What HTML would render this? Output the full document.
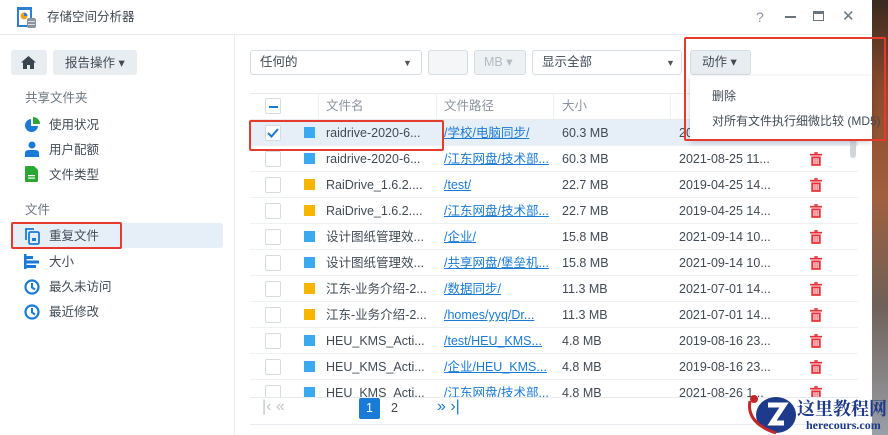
<!DOCTYPE html>
<html><head><meta charset="utf-8"><style>
*{margin:0;padding:0;box-sizing:border-box}
body{width:888px;height:435px;overflow:hidden;background:#fff;font-family:"Liberation Sans","Noto Sans CJK SC",sans-serif;font-size:12.5px;color:#414b55;position:relative}
.a{position:absolute}
.desk{left:872px;top:0;width:16px;height:435px;background:linear-gradient(180deg,#3a2a22 0%,#8a4a2c 20%,#a0603e 45%,#6f6058 70%,#9aa0a8 100%)}
.grp{position:absolute;left:25px;color:#6a7580;font-size:12.5px;line-height:16px}
.cb{position:absolute;left:265px;width:16px;height:16px;border:1px solid #d6dce2;border-radius:2px;background:#fff}
.sq{position:absolute;left:304px;width:11px;height:11px}
.row{position:absolute;left:250px;width:608px;height:26px;border-bottom:1px solid #eef1f4}
.t{position:absolute;white-space:nowrap;font-size:12.5px;color:#414b55;line-height:16px}
.lk{color:#1a7bd6;text-decoration:underline}
.red{position:absolute;border:2px solid #e53a2e;border-radius:2px}
.btn{position:absolute;border:1px solid #d6dde4;border-radius:3px;background:#fff}
</style></head><body>
<div class="a desk"></div>
<svg class="a" style="left:15px;top:6px" width="24" height="24" viewBox="0 0 24 24"><rect x="2" y="1" width="15" height="20" fill="#2f7fd0"/><rect x="4" y="4" width="11" height="15" fill="#fff"/><circle cx="9" cy="10" r="3.5" fill="#f0a020"/><path d="M9 10V6.5A3.5 3.5 0 0 1 12.5 10z" fill="#2f7fd0"/><rect x="12" y="12" width="9" height="10" rx="2" fill="#8a949e"/><rect x="13" y="15" width="7" height="1" fill="#ddd"/><rect x="13" y="18" width="7" height="1" fill="#ddd"/></svg>
<div class="t" style="left:47px;top:9px">存储空间分析器</div>
<div class="t" style="left:756px;top:9px;font-size:14px;color:#8a949e">?</div>
<div class="a" style="left:785px;top:16px;width:11px;height:2px;background:#6a7580"></div>
<div class="a" style="left:813px;top:11px;width:11px;height:10px;border:1.5px solid #6a7580;border-top-width:3px"></div>
<div class="t" style="left:842px;top:9px;font-size:15px;color:#6a7580">✕</div>
<div class="a" style="left:0;top:34px;width:872px;height:1px;background:#e8ecf0"></div>
<div class="a" style="left:234px;top:35px;width:1px;height:400px;background:#e8ecf0"></div>
<div class="a" style="left:11px;top:50px;width:36px;height:25px;background:#e8edf2;border-radius:3px"></div>
<svg class="a" style="left:21px;top:56px" width="15" height="13" viewBox="0 0 15 13"><path d="M7.5 0L0 6.5h2V13h4V9h3v4h4V6.5h2z" fill="#3a444e"/></svg>
<div class="a" style="left:53px;top:50px;width:84px;height:25px;background:#e8edf2;border-radius:3px"></div>
<div class="t" style="left:65px;top:55px">报告操作 ▾</div>
<div class="grp" style="top:90px">共享文件夹</div>
<svg class="a" style="left:24px;top:117px" width="16" height="16" viewBox="0 0 16 16"><path d="M7 2A6.5 6.5 0 1 0 14 9H7z" fill="#1a7bd6"/><path d="M9 0V7h7A7 7 0 0 0 9 0z" fill="#2aa832"/></svg>
<div class="t" style="left:49px;top:117px">使用状况</div>
<svg class="a" style="left:25px;top:141px" width="14" height="16" viewBox="0 0 14 16"><circle cx="7" cy="4" r="3.5" fill="#1a7bd6"/><path d="M0 16V12Q0 9 4 9h6q4 0 4 3v4z" fill="#1a7bd6"/></svg>
<div class="t" style="left:49px;top:142px">用户配额</div>
<svg class="a" style="left:25px;top:166px" width="13" height="16" viewBox="0 0 13 16"><path d="M0 1Q0 0 1 0h8l4 4v11q0 1-1 1H1q-1 0-1-1z" fill="#2aa832"/><rect x="3" y="9" width="7" height="1.2" fill="#fff"/><rect x="3" y="11.5" width="7" height="1.2" fill="#fff"/></svg>
<div class="t" style="left:49px;top:167px">文件类型</div>
<div class="grp" style="top:202px">文件</div>
<div class="a" style="left:11px;top:223px;width:212px;height:25px;background:#e6eef8;border-radius:3px"></div>
<svg class="a" style="left:24px;top:228px" width="16" height="17" viewBox="0 0 16 17"><path d="M2 12V1h8" fill="none" stroke="#1a7bd6" stroke-width="1.8"/><rect x="5" y="4" width="10" height="12" rx="1.5" fill="none" stroke="#1a7bd6" stroke-width="1.8"/><rect x="8" y="10" width="4" height="3" fill="#1a7bd6"/></svg>
<div class="t" style="left:49px;top:228px">重复文件</div>
<svg class="a" style="left:24px;top:254px" width="16" height="15" viewBox="0 0 16 15"><rect x="0" y="0" width="2.5" height="15" fill="#1a7bd6"/><rect x="2" y="2" width="7" height="3" fill="#1a7bd6"/><rect x="2" y="6.5" width="13" height="3" fill="#1a7bd6"/><rect x="2" y="11" width="10" height="3" fill="#1a7bd6"/></svg>
<div class="t" style="left:49px;top:254px">大小</div>
<svg class="a" style="left:24px;top:279px" width="16" height="16" viewBox="0 0 16 16"><circle cx="8" cy="8" r="6.5" fill="none" stroke="#1a7bd6" stroke-width="2.2"/><path d="M8 4v4.5l3 2" fill="none" stroke="#1a7bd6" stroke-width="2"/></svg>
<div class="t" style="left:49px;top:279px">最久未访问</div>
<svg class="a" style="left:24px;top:304px" width="16" height="16" viewBox="0 0 16 16"><circle cx="8" cy="8" r="6.5" fill="none" stroke="#1a7bd6" stroke-width="2.2"/><path d="M8 4v4.5l3 2" fill="none" stroke="#1a7bd6" stroke-width="2"/></svg>
<div class="t" style="left:49px;top:304px">最近修改</div>
<div class="red" style="left:11px;top:222px;width:111px;height:27px"></div>
<div class="btn" style="left:250px;top:50px;width:172px;height:25px"></div>
<div class="t" style="left:260px;top:54px">任何的</div>
<div class="t" style="left:403px;top:55px;font-size:9px;color:#555">▼</div>
<div class="btn" style="left:428px;top:50px;width:40px;height:25px;background:#f4f6f8"></div>
<div class="btn" style="left:474px;top:50px;width:52px;height:25px;background:#eef1f4"></div>
<div class="t" style="left:484px;top:54px;color:#b3bac2">MB ▾</div>
<div class="btn" style="left:532px;top:50px;width:150px;height:25px"></div>
<div class="t" style="left:542px;top:54px">显示全部</div>
<div class="t" style="left:666px;top:55px;font-size:9px;color:#555">▼</div>
<div class="a" style="left:690px;top:50px;width:61px;height:25px;background:#e8edf2;border:1px solid #d6dde4;border-radius:3px"></div>
<div class="t" style="left:702px;top:54px">动作 ▾</div>
<div class="a" style="left:250px;top:93px;width:608px;height:1px;background:#e8ecf0"></div>
<div class="a" style="left:250px;top:119px;width:608px;height:1px;background:#e8ecf0"></div>
<div class="cb" style="top:98px"></div><div class="a" style="left:269px;top:106px;width:9px;height:2px;background:#1a7bd6"></div>
<div class="a" style="left:318px;top:94px;width:1px;height:25px;background:#eef1f4"></div>
<div class="a" style="left:436px;top:94px;width:1px;height:25px;background:#eef1f4"></div>
<div class="a" style="left:553px;top:94px;width:1px;height:25px;background:#eef1f4"></div>
<div class="a" style="left:670px;top:94px;width:1px;height:25px;background:#eef1f4"></div>
<div class="t" style="left:326px;top:98px;color:#8a949e">文件名</div>
<div class="t" style="left:444px;top:98px;color:#8a949e">文件路径</div>
<div class="t" style="left:562px;top:98px;color:#8a949e">大小</div>
<div class="row" style="top:120px;background:#e6eef8"></div>
<div class="a" style="left:850px;top:126px;width:6px;height:32px;background:#d0d5da;border-radius:3px"></div>
<div id="rows"></div>
<script>
var d=[["raidrive-2020-6...","/学校/电脑同步/","60.3 MB","20","#3aa9f0"],
["raidrive-2020-6...","/江东网盘/技术部...","60.3 MB","2021-08-25 11...","#3aa9f0"],
["RaiDrive_1.6.2....","/test/","22.7 MB","2019-04-25 14...","#f7b500"],
["RaiDrive_1.6.2....","/江东网盘/技术部...","22.7 MB","2019-04-25 14...","#f7b500"],
["设计图纸管理效...","/企业/","15.8 MB","2021-09-14 10...","#3aa9f0"],
["设计图纸管理效...","/共享网盘/堡垒机...","15.8 MB","2021-09-14 10...","#3aa9f0"],
["江东-业务介绍-2...","/数据同步/","11.3 MB","2021-07-01 14...","#f7b500"],
["江东-业务介绍-2...","/homes/yyq/Dr...","11.3 MB","2021-07-01 14...","#f7b500"],
["HEU_KMS_Acti...","/test/HEU_KMS...","4.8 MB","2019-08-16 23...","#3aa9f0"],
["HEU_KMS_Acti...","/企业/HEU_KMS...","4.8 MB","2019-08-16 23...","#3aa9f0"],
["HEU_KMS_Acti...","/江东网盘/技术部...","4.8 MB","2021-08-26 1...","#3aa9f0"]];
var h="";
d.forEach(function(r,i){var y=120+i*26;var c=y+13;
if(i>0)h+='<div class="row" style="top:'+y+'px"></div>';
h+='<div class="cb" style="top:'+(c-8)+'px"></div>';
h+='<div class="sq" style="top:'+(c-6)+'px;background:'+r[4]+'"></div>';
h+='<div class="t" style="left:326px;top:'+(c-8)+'px">'+r[0]+'</div>';
h+='<div class="t lk" style="left:444px;top:'+(c-8)+'px">'+r[1]+'</div>';
h+='<div class="t" style="left:562px;top:'+(c-8)+'px">'+r[2]+'</div>';
h+='<div class="t" style="left:679px;top:'+(c-8)+'px">'+r[3]+'</div>';
if(i>0)h+='<svg class="a" style="left:810px;top:'+(c-7)+'px" width="12" height="14" viewBox="0 0 14 16"><rect x="0" y="2" width="14" height="2" fill="#e5323a"/><rect x="5" y="0" width="4" height="2" fill="#e5323a"/><path d="M1.5 5h11v11h-11z" fill="#e5323a"/><rect x="4" y="7" width="1.3" height="7" fill="#fff"/><rect x="6.4" y="7" width="1.3" height="7" fill="#fff"/><rect x="8.8" y="7" width="1.3" height="7" fill="#fff"/></svg>';
});
document.getElementById("rows").innerHTML=h;
</script>
<svg class="a" style="left:265px;top:125px" width="16" height="16"><path d="M3 8l3.5 3.5L13 4" fill="none" stroke="#1a7bd6" stroke-width="2"/></svg>
<div class="a" style="left:235px;top:397px;width:637px;height:38px;background:#fff"></div>
<div class="a" style="left:250px;top:397px;width:608px;height:1px;background:#e8ecf0"></div>
<div class="a" style="left:250px;top:424px;width:608px;height:1px;background:#e8ecf0"></div>
<div class="t" style="left:262px;top:399px;font-size:16px;color:#c0c6cc">|‹ «</div>
<div class="a" style="left:359px;top:398px;width:21px;height:21px;background:#1a7bd6;border-radius:2px;color:#fff;text-align:center;line-height:21px;font-size:12.5px">1</div>
<div class="t" style="left:391px;top:400px">2</div>
<div class="t" style="left:437px;top:399px;font-size:16px;color:#1a7bd6">» ›|</div>
<div class="a" style="left:690px;top:76px;width:182px;height:64px;background:#fff;box-shadow:0 2px 6px rgba(0,0,0,.2)"></div>
<div class="t" style="left:712px;top:88px;font-size:12px">删除</div>
<div class="t" style="left:712px;top:113px;font-size:12px">对所有文件执行细微比较 (MD5)</div>
<div class="red" style="left:684px;top:37px;width:202px;height:104px"></div>
<div class="red" style="left:249px;top:120px;width:195px;height:31px"></div>
<svg class="a" style="left:746px;top:393px" width="56" height="42" viewBox="0 0 56 42"><ellipse cx="30" cy="22" rx="20" ry="18" fill="#1e3a8a"/><path d="M22 12h16L26 30h12" fill="none" stroke="#fff" stroke-width="5"/><path d="M4 8Q0 30 30 40" fill="none" stroke="#c0282a" stroke-width="3"/><circle cx="8" cy="6" r="4" fill="#c0282a"/></svg>
<div class="t" style="left:797px;top:398px;font-family:'Noto Serif CJK SC',serif;font-weight:bold;font-size:18px;line-height:20px;color:#1e3a8a">这里教程网</div>
<div class="t" style="left:806px;top:418px;font-family:'Liberation Serif',serif;font-weight:bold;font-size:12px;line-height:14px;color:#1e3a8a">herecours.com</div>
</body></html>
